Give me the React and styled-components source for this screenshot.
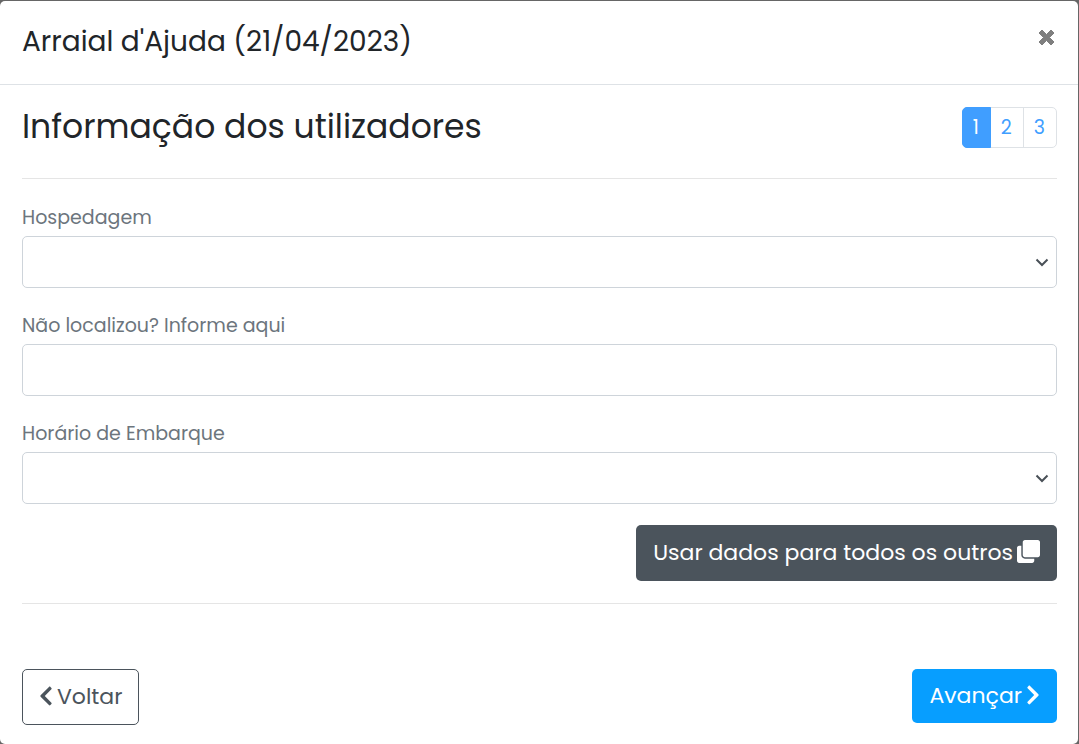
import React from "react";
import styled, { createGlobalStyle } from "styled-components";
import { FaChevronLeft, FaChevronRight, FaClone } from "react-icons/fa";

const pages = [1, 2, 3];

const CloseIcon = () => (
  <svg width="17" height="17" viewBox="0 0 17 17" aria-hidden="true">
    <path
      d="M4 1 8.500 5.500 13 1 16 4 11.500 8.500 16 13 13 16 8.500 11.500 4 16 1 13 5.500 8.500 1 4Z"
      fill="currentColor"
      stroke="currentColor"
      strokeLinejoin="round"
    />
  </svg>
);

export default function App() {
  return (
    <>
      <GlobalStyle />
      <Modal role="dialog" aria-labelledby="modal-title">
        <ModalHeader>
          <ModalTitle id="modal-title">Arraial d'Ajuda (21/04/2023)</ModalTitle>
          <CloseButton type="button" aria-label="Fechar">
            <CloseIcon />
          </CloseButton>
        </ModalHeader>

        <ModalBody>
          <SectionHeader>
            <SectionTitle>Informação dos utilizadores</SectionTitle>
            <Pagination aria-label="Utilizadores">
              {pages.map((page) => (
                <PageLink key={page} href={`#${page}`} $active={page === 1}>
                  {page}
                </PageLink>
              ))}
            </Pagination>
          </SectionHeader>

          <Divider />

          {/* Dados do utilizador */}
          <Fields>
            <Field>
              <Label htmlFor="hospedagem">Hospedagem</Label>
              <Select id="hospedagem" defaultValue="">
                <option value=""></option>
              </Select>
            </Field>
            <Field>
              <Label htmlFor="outra-hospedagem">Não localizou? Informe aqui</Label>
              <Input id="outra-hospedagem" type="text" />
            </Field>
            <Field>
              <Label htmlFor="horario">Horário de Embarque</Label>
              <Select id="horario" defaultValue="">
                <option value=""></option>
              </Select>
            </Field>
            <CopyButton type="button">
              Usar dados para todos os outros
              <FaClone />
            </CopyButton>
          </Fields>

          <Divider />

          {/* Ações */}
          <Actions>
            <BackButton type="button">
              <FaChevronLeft />
              Voltar
            </BackButton>
            <NextButton type="button">
              Avançar
              <FaChevronRight />
            </NextButton>
          </Actions>
        </ModalBody>
      </Modal>
    </>
  );
}

const GlobalStyle = createGlobalStyle`
  *, *::before, *::after {
    box-sizing: border-box;
  }

  body {
    margin: 0;
    background: #666;
    color: #212529;
    font-family: Poppins, Inter, sans-serif;
    font-size: 19px;
    line-height: 30px;
  }

  button, input, select {
    font: inherit;
  }
`;

const Modal = styled.div`
  display: flex;
  flex-direction: column;
  min-height: calc(100vh - 1px);
  margin: 1px 1px 0 0;
  background: #fff;
  border-radius: 5px;
`;

const ModalHeader = styled.header`
  display: flex;
  justify-content: space-between;
  align-items: flex-start;
  padding: 20px 22px 21px;
  border-bottom: 1px solid #dee2e6;
`;

const ModalTitle = styled.h5`
  margin: 0;
  font-size: 28px;
  font-weight: 400;
  line-height: 42px;
`;

const CloseButton = styled.button`
  display: flex;
  padding: 8px 1px;
  border: none;
  background: none;
  color: #7f7f7f;
  cursor: pointer;
`;

const ModalBody = styled.div`
  padding: 22px 21px 19px 22px;
`;

const SectionHeader = styled.div`
  display: flex;
  justify-content: space-between;
  align-items: flex-start;
  margin-bottom: 30px;
`;

const SectionTitle = styled.h3`
  margin: 0;
  font-size: 33px;
  font-weight: 400;
  line-height: 40px;
`;

const Pagination = styled.nav`
  display: flex;
  border: 1px solid #dee2e6;
  border-radius: 5px;
`;

const PageLink = styled.a`
  padding: 5px 11px 4px 10px;
  margin: ${({ $active }) => ($active ? "-1px 0 -1px -1px" : "0")};
  border: ${({ $active }) => ($active ? "1px solid #409eff" : "none")};
  border-radius: ${({ $active }) => ($active ? "5px 0 0 5px" : "0")};
  background: ${({ $active }) => ($active ? "#409eff" : "transparent")};
  color: ${({ $active }) => ($active ? "#fff" : "#409eff")};
  text-decoration: none;

  & + & + & {
    border-left: 1px solid #dee2e6;
  }
`;

const Divider = styled.hr`
  margin: 0;
  border: none;
  border-top: 1px solid #e5e5e5;
`;

const Fields = styled.div`
  display: flex;
  flex-direction: column;
  gap: 21px;
  padding: 22px 0;
`;

const Field = styled.div`
  display: flex;
  flex-direction: column;
  gap: 1px;
`;

const Label = styled.label`
  color: #6c757d;
  line-height: 34px;
`;

const Input = styled.input`
  width: 100%;
  height: 52px;
  padding: 8px 16px;
  border: 1px solid #ced4da;
  border-radius: 5px;
  background-color: #fff;
  color: #495057;
`;

const Select = styled(Input).attrs({ as: "select" })`
  appearance: none;
  background-image: url("data:image/svg+xml,%3Csvg xmlns='http://www.w3.org/2000/svg' width='14' height='9' fill='none' stroke='%23495057' stroke-width='2'%3E%3Cpath d='M1.5 1.5 7 7l5.5-5.5'/%3E%3C/svg%3E");
  background-repeat: no-repeat;
  background-position: right 7px center;
`;

const Button = styled.button`
  display: inline-flex;
  align-items: center;
  gap: 4px;
  padding: 11px 16px;
  border: 1px solid transparent;
  border-radius: 5px;
  font-size: 22px;
  line-height: 32px;
  cursor: pointer;

  svg {
    width: 14px;
    height: 22px;
    margin-bottom: 3px;
  }
`;

const CopyButton = styled(Button)`
  align-self: flex-end;
  background: #4b545c;
  color: #fff;

  svg {
    width: 23px;
    height: 23px;
  }
`;

const Actions = styled.div`
  display: flex;
  justify-content: space-between;
  align-items: flex-start;
  padding-top: 65px;
`;

const BackButton = styled(Button)`
  border-color: #4b545c;
  background: transparent;
  color: #4b545c;
`;

const NextButton = styled(Button)`
  background: #079eff;
  color: #fff;
  line-height: 30px;
`;
